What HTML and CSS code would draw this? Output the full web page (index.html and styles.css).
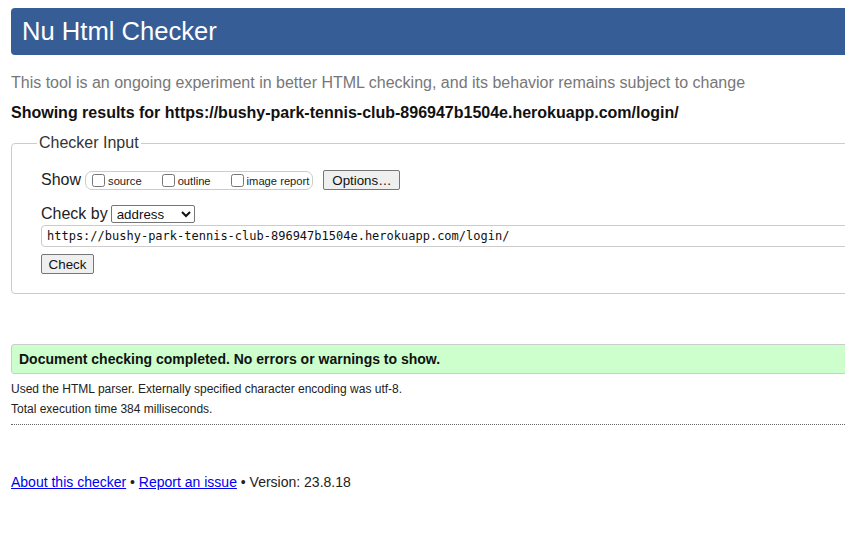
FILE: index.html
```html
<!DOCTYPE html>
<html lang="en">
<head>
<meta charset="utf-8">
<title>Showing results for https://bushy-park-tennis-club-896947b1504e.herokuapp.com/login/ - Nu Html Checker</title>
<link rel="stylesheet" href="styles.css">
</head>
<body>
<div class="page">
  <header class="banner"><h1 class="title">Nu Html Checker</h1></header>
  <p class="intro">This tool is an ongoing experiment in better HTML checking, and its behavior remains subject to change</p>
  <p class="results">Showing results for https://bushy-park-tennis-club-896947b1504e.herokuapp.com/login/</p>
  <form class="form">
    <fieldset class="checker">
      <legend class="legend">Checker Input</legend>
      <div class="row show-row">
        <span class="row-label">Show</span>
        <span class="opts">
          <label class="opt"><input type="checkbox" class="cb">source</label>
          <label class="opt"><input type="checkbox" class="cb">outline</label>
          <label class="opt last"><input type="checkbox" class="cb">image report</label>
        </span>
        <button type="button" class="btn options">Options…</button>
      </div>
      <div class="row by-row">
        <span class="row-label">Check by</span>
        <select class="sel"><option>address</option></select>
      </div>
      <input class="url" type="text" value="https://bushy-park-tennis-club-896947b1504e.herokuapp.com/login/">
      <div class="submit-row"><button type="button" class="btn check">Check</button></div>
    </fieldset>
  </form>
  <div class="success">Document checking completed. No errors or warnings to show.</div>
  <p class="details">Used the HTML parser. Externally specified character encoding was utf-8.</p>
  <p class="details second">Total execution time 384 milliseconds.</p>
  <div class="rule"></div>
  <footer class="foot"><a href="#" class="link">About this checker</a> • <a href="#" class="link">Report an issue</a> • Version: 23.8.18</footer>
</div>
</body>
</html>
```

FILE: styles.css
```css
html, body {
  margin: 0;
  padding: 0;
  overflow: hidden;
  background: #fff;
}
body {
  font-family: "Liberation Sans", Arial, sans-serif;
  color: #222;
}
.page {
  width: 1000px;
  padding: 8px 0 0 11px;
}
.banner {
  height: 47px;
  background: #365d95;
  border-radius: 4px 0 0 4px;
}
.title {
  margin: 0;
  padding-left: 11px;
  font-size: 25.6px;
  font-weight: normal;
  line-height: 47px;
  color: #fff;
}
.intro {
  margin: 19px 0 0;
  font-size: 16px;
  line-height: 18px;
  color: #777;
}
.results {
  margin: 12px 0 0;
  font-size: 16px;
  line-height: 18px;
  font-weight: bold;
  color: #111;
}
.form {
  margin: 12px 0 0;
}
.checker {
  margin: 0;
  padding: 18px 0 19px 29px;
  border: 1px solid #ccc;
  border-radius: 4px;
}
.legend {
  margin-left: -4px;
  padding: 0 2px;
  font-size: 16px;
  line-height: 18px;
  color: #333;
}
.row {
  display: flex;
  align-items: center;
}
.row-label {
  font-size: 16px;
  line-height: 18px;
  color: #222;
}
.show-row {
  height: 20px;
}
.opts {
  display: inline-flex;
  align-items: center;
  height: 17px;
  margin-left: 4px;
  padding: 0 3px 0 2px;
  border: 1px solid #ccc;
  border-radius: 7px;
}
.opt {
  display: inline-flex;
  align-items: center;
  margin-right: 16px;
  font-size: 11.2px;
  line-height: 13px;
  color: #222;
  padding-top: 2px;
}
.opt.last {
  margin-right: 0;
}
.cb {
  width: 13px;
  height: 13px;
  margin: 0 3px 2px 4px;
}
.btn {
  font-family: "Liberation Sans", Arial, sans-serif;
  font-size: 13.33px;
  height: 20px;
  padding: 0 6px;
  border: 1px solid #767676;
  border-radius: 2px;
  background: #efefef;
  color: #111;
}
.options {
  margin-left: 10px;
  width: 77px;
}
.by-row {
  height: 18px;
  margin-top: 15px;
}
.sel {
  margin-left: 3px;
  width: 84px;
  height: 18px;
  font-family: "Liberation Sans", Arial, sans-serif;
  font-size: 13.33px;
  padding: 0 0 0 1px;
  border: 1px solid #767676;
  border-radius: 2px;
  background: #fff;
  color: #111;
}
.url {
  display: block;
  box-sizing: border-box;
  width: 920px;
  height: 22px;
  margin: 2px 0 0;
  padding: 0 5px;
  border: 1px solid #ccc;
  border-radius: 4px;
  font-family: "DejaVu Sans Mono", "Liberation Mono", monospace;
  font-size: 12px;
  color: #111;
}
.submit-row {
  margin-top: 7px;
  display: flex;
}
.check {
  width: 53px;
}
.success {
  margin-top: 50px;
  padding: 6px 7px;
  border: 1px solid #ccc;
  border-radius: 3px;
  background: #ccffcc;
  font-size: 14px;
  line-height: 16px;
  font-weight: bold;
  color: #111;
}
.details {
  margin: 8px 0 0;
  font-size: 12px;
  line-height: 14px;
  color: #222;
}
.details.second {
  margin-top: 6px;
}
.rule {
  margin-top: 8px;
  border-top: 1px dotted #666;
}
.foot {
  margin-top: 49px;
  font-size: 14px;
  line-height: 16px;
  color: #222;
}
.link {
  color: #0000ee;
}
```
